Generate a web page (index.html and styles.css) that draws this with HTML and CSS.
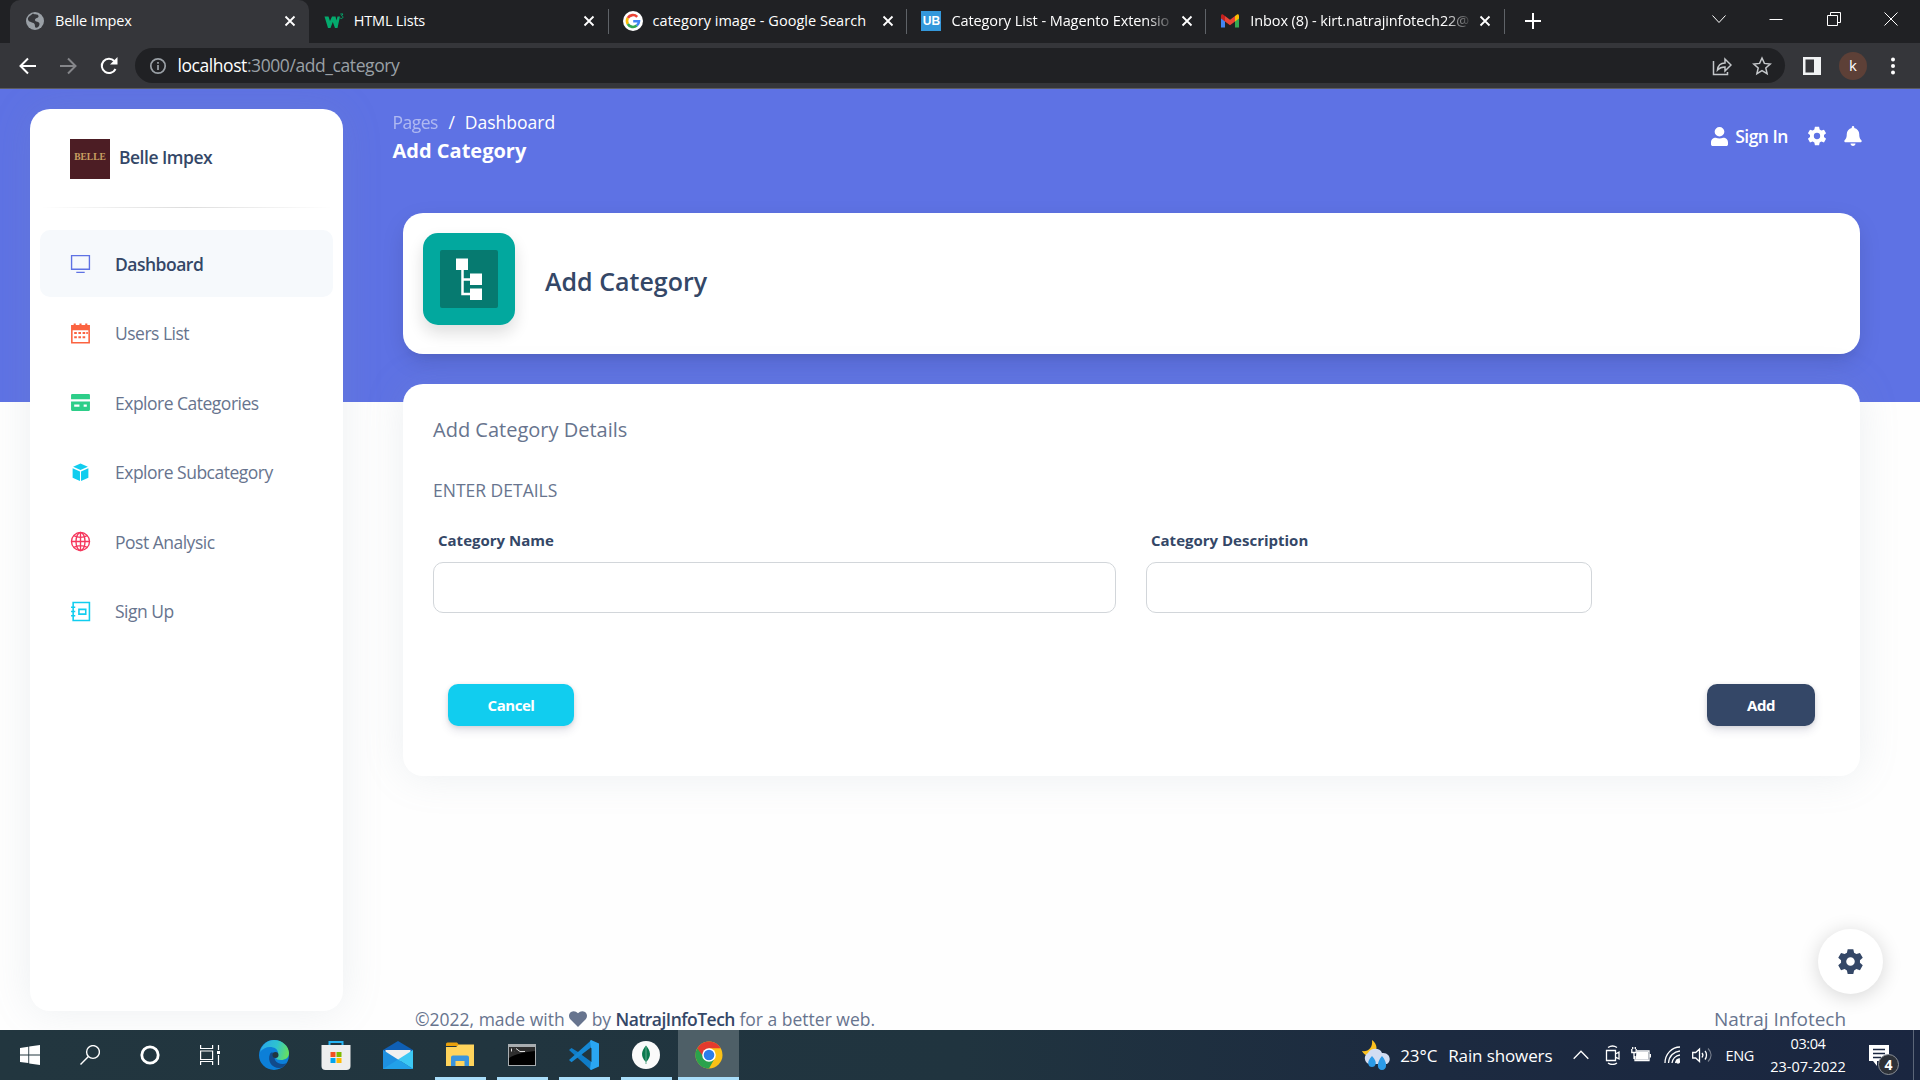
FILE: index.html
```html
<!DOCTYPE html>
<html lang="en">
<head>
<meta charset="utf-8">
<title>Belle Impex</title>
<link rel="stylesheet" href="styles.css">
</head>
<body>
<header class="tabstrip">
  <div class="tab tab-active">
    <svg class="fav" viewBox="0 0 20 20"><circle cx="10" cy="10" r="9" fill="#9aa0a6"/><path d="M8 2.500c2 1.500 5 0 5.500 2.500S10 6.500 10 9s4.500 1 4.500 4-3 4.500-4 3.500 0-3.500-2-4.500-5-1-5.500-3.500S5 5 8 2.500z" fill="#35363a"/></svg>
    <span class="tab-title snug">Belle Impex</span>
    <svg class="x" viewBox="0 0 12 12"><path d="M1.500 1.500l9 9m0-9l-9 9"/></svg>
  </div>
  <div class="tab">
    <svg class="fav" viewBox="0 0 20 20"><path d="M.5 5.500h4l1.500 4.500L8 5.500h3.500l1 4 1-4h2.500L13.500 17h-2.500L8.800 11 6.500 17H4z" fill="#04aa6d"/><path d="M16.300 3h2.700l-1.500 1.700c2 .3 1.800 2.800-.3 2.800l-1-.4" fill="none" stroke="#04aa6d" stroke-width="1"/></svg>
    <span class="tab-title snug">HTML Lists</span>
    <svg class="x" viewBox="0 0 12 12"><path d="M1.500 1.500l9 9m0-9l-9 9"/></svg>
  </div>
  <div class="tab tab-sep">
    <svg class="fav" viewBox="0 0 20 20"><circle cx="10" cy="10" r="10" fill="#fff"/><g fill="none" stroke-width="2.600"><path d="M14.200 5.800A6 6 0 0 0 4.800 7" stroke="#ea4335"/><path d="M4.800 7a6 6 0 0 0 0 6" stroke="#fbbc05"/><path d="M4.800 13a6 6 0 0 0 9 1.600" stroke="#34a853"/><path d="M13.800 14.600A6 6 0 0 0 16 10.200H10.200" stroke="#4285f4"/></g></svg>
    <span class="tab-title even">category image - Google Search</span>
    <svg class="x" viewBox="0 0 12 12"><path d="M1.500 1.500l9 9m0-9l-9 9"/></svg>
  </div>
  <div class="tab tab-sep">
    <span class="fav ub">UB</span>
    <span class="tab-title fade">Category List - Magento Extensio</span>
    <svg class="x" viewBox="0 0 12 12"><path d="M1.500 1.500l9 9m0-9l-9 9"/></svg>
  </div>
  <div class="tab tab-sep">
    <svg class="fav" viewBox="0 0 20 20"><path d="M1 5v11.500h4V8z" fill="#4285f4"/><path d="M19 5v11.500h-4V8z" fill="#34a853"/><path d="M15 5l2-1.500c1-.6 2 0 2 1.500v2.500l-4 3z" fill="#fbbc04"/><path d="M5 5L3 3.500C2 2.900 1 3.500 1 5v2.500l4 3z" fill="#c5221f"/><path d="M5 5l5 3.800L15 5v5.500l-5 3.800-5-3.800z" fill="#ea4335"/></svg>
    <span class="tab-title fade">Inbox (8) - kirt.natrajinfotech22@</span>
    <svg class="x" viewBox="0 0 12 12"><path d="M1.500 1.500l9 9m0-9l-9 9"/></svg>
  </div>
  <div class="newtab"><svg viewBox="0 0 16 16"><path d="M8 0v16M0 8h16"/></svg></div>
  <div class="winctl">
    <svg viewBox="0 0 14 14"><path d="M.5 3.500L7 10.500l6.500-7"/></svg>
    <svg viewBox="0 0 14 14"><path d="M.5 7.500h13"/></svg>
    <svg viewBox="0 0 14 14"><path d="M.5 3.500h10v10H.5zM3.500 3.500v-3h10v10h-3"/></svg>
    <svg viewBox="0 0 14 14"><path d="M.5.5l13 13m0-13l-13 13"/></svg>
  </div>
</header>
<nav class="toolbar">
  <svg class="nav-ico" viewBox="0 0 20 20"><path d="M18 10H2.500M10 2.500L2.500 10l7.500 7.500"/></svg>
  <svg class="nav-ico dim" viewBox="0 0 20 20"><path d="M2 10h15.500M10 2.500l7.500 7.500-7.500 7.500"/></svg>
  <svg class="nav-ico" viewBox="0 0 20 20"><path d="M16.500 13a7.200 7.200 0 1 1-1.200-8"/><path d="M18.500 1v7.500H11z" fill="#fff" stroke="none"/></svg>
  <div class="omnibox">
    <svg class="info" viewBox="0 0 18 18"><circle cx="9" cy="9" r="7.200"/><path d="M9 8v5M9 5v1.800"/></svg>
    <span class="url"><b>localhost</b>:3000/add_category</span>
    <svg class="share" viewBox="0 0 20 20"><path d="M1.500 5v13.500h14V16M5.500 14c.5-5 3-7 7.500-7V3l6 6-6 6v-4c-3.500 0-5.500.8-7.500 3z"/></svg>
    <svg class="star" viewBox="0 0 20 20"><path d="M10 2l2.400 5.400 5.800.6-4.400 3.900 1.300 5.800L10 14.700l-5.100 3 1.300-5.800L1.800 8l5.800-.6z"/></svg>
  </div>
  <svg class="side" viewBox="0 0 18 18"><path d="M0 0h18v18H0zM2.500 2.500v13h8.500v-13z" fill="#f1f3f4" fill-rule="evenodd"/></svg>
  <span class="avatar">k</span>
  <svg class="dots" viewBox="0 0 4 18"><circle cx="2" cy="2.500" r="2"/><circle cx="2" cy="9" r="2"/><circle cx="2" cy="15.500" r="2"/></svg>
</nav>
<div class="page">
  <aside class="sidebar">
    <div class="brand"><span class="logo">BELLE</span><span class="medium">Belle Impex</span></div>
    <div class="rule"></div>
    <ul class="menu">
      <li class="active"><svg viewBox="0 0 20 20" stroke="#5e72e4"><path d="M1.500 2.500h17v13h-17zM6 18.500h8" fill="none" stroke-width="1.300"/></svg><span class="medium">Dashboard</span></li>
      <li><svg viewBox="0 0 20 20" fill="#fb6340"><path fill-rule="evenodd" d="M1 2h2.500V.5h2V2h3.500V.5h2V2h3.500V.5h2V2H19v17.500H1zM2.500 7v11h15V7zM8 8.500h2.500v2H8zm4 0h2.500v2H12zM4 12.500h2.500v2H4zm4 0h2.500v2H8zm-4-4h2.500v2H4zm11.500 0H17v2h-1.500zM12 12.500h2.500v2H12z"/></svg><span>Users List</span></li>
      <li><svg viewBox="0 0 20 20" fill="#2dce89"><path fill-rule="evenodd" d="M2 2h16a1 1 0 0 1 1 1v4H1V3a1 1 0 0 1 1-1zM1 9h18v8a1 1 0 0 1-1 1H2a1 1 0 0 1-1-1zM4 12v2h5v-2zm9 0v2h3v-2z"/></svg><span>Explore Categories</span></li>
      <li><svg viewBox="0 0 20 20" fill="#11cdef"><path d="M10 1.500l7 3-7 3-7-3zM2.500 6l7 3v9l-7-3zM17.500 6l-7 3v9l7-3z"/></svg><span>Explore Subcategory</span></li>
      <li><svg viewBox="0 0 20 20" fill="none" stroke="#f5365c" stroke-width="1.300"><circle cx="10" cy="10" r="8.600"/><ellipse cx="10" cy="10" rx="4.300" ry="8.600"/><path d="M10 1.400v17.200M1.400 10h17.200M3.500 4.500c4 2 9 2 13 0M3.500 15.500c4-2 9-2 13 0"/></svg><span>Post Analysic</span></li>
      <li><svg viewBox="0 0 20 20" fill="none" stroke="#11cdef" stroke-width="1.500"><path d="M3 1.500h15.500v17H3zM8.500 8h6.500v4.500H8.500zM1 6h4M1 10h4M1 14h4"/></svg><span>Sign Up</span></li>
    </ul>
  </aside>
  <main class="main">
    <div class="topbar">
      <div>
        <div class="crumbs"><span class="muted">Pages</span><i>/</i><span>Dashboard</span></div>
        <h6 class="title">Add Category</h6>
      </div>
      <div class="actions">
        <svg class="user" viewBox="0 0 448 512" preserveAspectRatio="none"><path d="M224 256A128 128 0 1 0 224 0a128 128 0 1 0 0 256zm-96 32C50 288 0 345 0 410v54c0 26 21 48 48 48h352c27 0 48-22 48-48v-54c0-65-50-122-128-122-60 28-132 28-192 0z"/></svg>
        <span class="signin">Sign In</span>
        <svg class="cog" viewBox="0 0 24 24"><path fill-rule="evenodd" d="M9.500 1h5l.7 3.200 2 1.200 3.200-1 2.500 4.300-2.500 2.200v2.300l2.500 2.200-2.500 4.300-3.200-1-2 1.200-.7 3.200h-5l-.7-3.200-2-1.200-3.200 1L1.100 15.400l2.500-2.200v-2.300L1.100 8.700l2.500-4.300 3.200 1 2-1.200zM12 8.200a3.800 3.800 0 1 0 0 7.600 3.800 3.800 0 0 0 0-7.600z"/></svg>
        <svg class="bell" viewBox="0 0 448 512"><path d="M224 512c35 0 64-29 64-64H160c0 35 29 64 64 64zM439 362c-19-20-55-51-55-154 0-77-54-139-128-155V32a32 32 0 1 0-64 0v21C118 69 64 131 64 208c0 103-36 134-55 154-6 6-9 14-9 22 0 16 13 32 32 32h384c19 0 32-16 32-32 0-8-3-16-9-22z"/></svg>
      </div>
    </div>
    <section class="card hero">
      <svg class="tile" viewBox="0 0 92 92"><rect width="92" height="92" fill="#02a89e"/><rect x="17" y="17" width="58" height="58" rx="2" fill="#067a70"/><path d="M39.500 36v25H48M39.500 46.500H48" fill="none" stroke="#fff" stroke-width="2.500"/><path d="M33 25.500h12v11.500H33zM47 40.500h12V52H47zM47 55.500h12V67H47z" fill="#fff"/></svg>
      <h5>Add Category</h5>
    </section>
    <section class="card form">
      <p class="lead">Add Category Details</p>
      <p class="sub">ENTER DETAILS</p>
      <div class="fields">
        <label class="w1"><span>Category Name</span><input type="text"></label>
        <label class="w2"><span>Category Description</span><input type="text"></label>
      </div>
      <div class="btns"><button class="btn info-btn">Cancel</button><button class="btn dark-btn">Add</button></div>
    </section>
    <footer class="foot">
      <span class="made"><span>©2022, made with</span><svg viewBox="0 0 18 16"><path d="M9 16L1.300 8.300C-.7 6-.3 2.500 2 1c2.200-1.500 5-1 7 1.200C11-.0 13.800-.5 16 1c2.300 1.500 2.700 5 .7 7.300z"/></svg><span>by</span><b>NatrajInfoTech</b><span>for a better web.</span></span>
      <span class="company">Natraj Infotech</span>
    </footer>
  </main>
  <div class="fab"><svg viewBox="0 0 24 24"><path fill-rule="evenodd" d="M9.500 1h5l.7 3.200 2 1.200 3.200-1 2.500 4.300-2.500 2.200v2.300l2.500 2.200-2.500 4.300-3.200-1-2 1.200-.7 3.200h-5l-.7-3.200-2-1.200-3.200 1L1.100 15.400l2.500-2.200v-2.300L1.100 8.700l2.500-4.300 3.200 1 2-1.200zM12 8.200a3.800 3.800 0 1 0 0 7.600 3.800 3.800 0 0 0 0-7.600z"/></svg></div>
</div>
<div class="taskbar">
  <div class="apps">
    <span class="app sm"><svg width="20" height="20" viewBox="0 0 20 20"><path d="M0 3l8.300-1.200v7.700H0zM9.200 1.600L20 0v9.500H9.200zM0 10.400h8.300v7.700L0 17zM9.200 10.400H20V20L9.200 18.400z" fill="#fff"/></svg></span>
    <span class="app sm"><svg width="20" height="20" viewBox="0 0 20 20" fill="none" stroke="#fff" stroke-width="1.400"><circle cx="13" cy="7" r="6.400"/><path d="M8.400 11.600L.5 19.500"/></svg></span>
    <span class="app sm"><svg width="20" height="20" viewBox="0 0 20 20" fill="none" stroke="#fff" stroke-width="2.800"><circle cx="10" cy="10" r="8.200"/></svg></span>
    <span class="app sm"><svg width="20" height="20" viewBox="0 0 20 20" fill="none" stroke="#fff" stroke-width="1.200"><path d="M.6 0v3.500h12V0M.6 6h12v8.500H.6zM.6 20v-3.500h12V20M18.500 0v5M18.500 10v10"/><path d="M17 6h3v3h-3z" fill="#fff" stroke="none"/></svg></span>
    <span class="app wd"><svg width="30" height="30" viewBox="0 0 30 30"><defs><linearGradient id="edge" x1="0" y1=".3" x2="1" y2=".5"><stop offset="0" stop-color="#2ba8e8"/><stop offset=".55" stop-color="#2ec2d0"/><stop offset="1" stop-color="#66e060"/></linearGradient></defs><circle cx="15" cy="15" r="15" fill="#0c7fd8"/><path d="M1 12C3 4 9 0 15 0c8 0 15 6 15 13 0 5-4 7-8 7-3 0-5-1-5-2s2-2 2-5c0-4-4-6-8-6-4 0-8 2-10 5z" fill="url(#edge)"/><path d="M11 14c-3 7 2 14 9 14 3 0 6-2 8-5-4 2-10 1-12-3-1-2 0-4 1-5-2-3-5-3-6-1z" fill="#114a8b"/><circle cx="16.500" cy="15" r="3" fill="#22363f"/></svg></span>
    <span class="app wd"><svg width="30" height="30" viewBox="0 0 30 30"><path d="M8.500 7V2h13v5" fill="none" stroke="#27b4f3" stroke-width="2"/><path d="M.5 5h29v21a4 4 0 0 1-4 4h-21a4 4 0 0 1-4-4z" fill="#eee"/><path d="M9.500 12h5v5h-5z" fill="#f25022"/><path d="M15.500 12h5v5h-5z" fill="#7fba00"/><path d="M9.500 18h5v5h-5z" fill="#00a4ef"/><path d="M15.500 18h5v5h-5z" fill="#ffb900"/></svg></span>
    <span class="app wd"><svg width="30" height="30" viewBox="0 0 30 30"><path d="M0 10L15 1l15 9v5H0z" fill="#0f5fb4"/><path d="M2.500 10h25v6L15 22 2.500 16z" fill="#f0f0f0"/><path d="M0 10l30 19H0z" fill="#1e90e0"/><path d="M30 10L15 19.500 30 29z" fill="#3cc8f4"/><path d="M15 19.500L30 29H0z" fill="#22a0e8"/></svg></span>
    <span class="app wd run"><svg width="28" height="26" viewBox="0 0 28 26"><path d="M0 2a1.500 1.500 0 0 1 1.500-1.500H11L14 4H0z" fill="#e8a00c"/><path d="M0 5h10l3-2.500h15V24H0z" fill="#ffd45c"/><path d="M5 24v-8.500a2 2 0 0 1 2-2h14a2 2 0 0 1 2 2V24h-4.500v-5h-9v5z" fill="#3a95dd"/></svg></span>
    <span class="app wd run"><svg width="28" height="24" viewBox="0 0 28 24"><path d="M0 1h28v22H0z" fill="#a8adb0"/><path d="M1 4h26v18H1z" fill="#000"/><path d="M1 4h26v4C16 9 8 11 1 15z" fill="#2e2e2e"/><path d="M3.500 5.500v3M6 5.500h.1M6 8.500h.1M8 5.500l4 3h5" stroke="#ddd" fill="none"/></svg></span>
    <span class="app wd run"><svg width="30" height="30" viewBox="0 0 30 30"><path d="M0 10l2.500-2L30 25l-8 5z" fill="#0f7cc7"/><path d="M0 20l2.500 2.300L22.500 7V0z" fill="#1588d4"/><path d="M22 0l8 3.500v23L22 30l-1-1 1-7V8l-1-7z" fill="#2aa6f2"/><path d="M22.500 8v14L13 15z" fill="#22363f"/></svg></span>
    <span class="app wd run"><svg width="28" height="28" viewBox="0 0 28 28"><circle cx="14" cy="14" r="14" fill="#fafafa"/><path d="M14 4.500c4.500 5 6 11 0 16.500-6-5.500-4.500-11.500 0-16.500z" fill="#0a7a4e"/><path d="M14 5v18" stroke="#5fa88a"/></svg></span>
    <span class="app last run"><svg width="28" height="28" viewBox="0 0 28 28"><circle cx="14" cy="14" r="13.500" fill="#fbc116"/><path d="M14 14L2.300 7.200A13.500 13.500 0 0 0 14 27.500l5-9z" fill="#2ba24c"/><path d="M2.300 7.200A13.500 13.500 0 0 1 25.700 7.200H14L8.500 16z" fill="#e33b2e"/><circle cx="14" cy="14" r="6.800" fill="#fff"/><circle cx="14" cy="14" r="5.300" fill="#2b7de9"/></svg></span>
  </div>
  <div class="tray">
    <svg class="weather" width="28" height="30" viewBox="0 0 28 30"><path d="M10 0c5 4 7 10 0 15-4 2-8 0-10-4 6 1 11-3 10-11z" fill="#fcc11f"/><path d="M7 24a6 6 0 0 1-1-11c2-5 12-6 14 0 8-1 10 8 5 11z" fill="#d2ddf2"/><path d="M10 16c-6 6-4 11 0 11s6-5 0-11zM20 16c-6 7-5 14 0 14s6-7 0-14z" fill="#2b9be8"/></svg>
    <span>23°C</span><span class="rain">Rain showers</span>
    <svg class="chev" width="16" height="10" viewBox="0 0 16 10"><path d="M.7 8.700L8 1.200l7.300 7.500"/></svg>
    <svg class="cam" width="16" height="20" viewBox="0 0 16 20"><path d="M1.500 5.500h9v10h-9zM10.500 9l3.500-2v7l-3.500-2M3 2.500c3-2 6-2 9 0M3 18c3 2 6 2 9 0"/></svg>
    <svg class="bat" width="20" height="16" viewBox="0 0 20 16"><path d="M6 4h12v9.500H4V9M19.500 7v3.500M.8 2v3.500h4.400V2M1.700 0v2M4.300 0v2M3 5.500V12"/><path d="M6 5.500h10.500V12H5.500z" fill="#fff"/></svg>
    <svg class="wifi" width="16" height="18" viewBox="0 0 16 18"><path d="M1 17C1 8 8 1 16 1M4.500 17C5 10 10 5.500 16 5M8 17c.5-4 3.500-7.500 8-8M11.500 17c.5-2 2-4 4.500-4"/><circle cx="14" cy="15.500" r="1.500" fill="#fff"/></svg>
    <svg class="vol" width="20" height="18" viewBox="0 0 20 18"><path d="M.7 6.500h3L7.500 3v12.500L3.700 12h-3zM10 7c1 1 1 3 0 4.500M13 5c2 2 2 6 0 8.500"/><path d="M16 2.500c4 4 4 9 0 13" opacity=".4"/></svg>
    <span class="lang">ENG</span>
    <div class="clock"><span class="time">03:04</span><span>23-07-2022</span></div>
    <div class="notif"><svg width="20" height="22" viewBox="0 0 20 22"><path d="M0 0h20v16H8v5l-4-5H0z" fill="#fff"/><path d="M4 4.500h12M4 8.500h12M4 12.500h8" stroke="#1b2740"/></svg><span class="badge">4</span></div>
  </div>
</div>
</body>
</html>
```
FILE: styles.css
```css
* { box-sizing: border-box; }
body { margin: 0; width: 1920px; height: 1080px; overflow: hidden; display: flex; flex-direction: column; font-family: "Open Sans", "Noto Sans", sans-serif; background: #fefefe; }
svg { display: block; flex: none; }
span { white-space: nowrap; }

/* browser chrome */
.tabstrip { flex: none; height: 43px; background: #202124; display: flex; align-items: stretch; padding-left: 10px; color: #fff; font-size: 14.500px; }
.tab { position: relative; flex: none; width: 298.800px; display: flex; align-items: center; padding: 0 11.500px 2px 15px; }
.tab-active { background: #35363a; border-radius: 10px 10px 0 0; }
.tab-sep::before { content: ""; position: absolute; left: 0; top: 9px; width: 1px; height: 25px; background: #5f6368; }
.fav { width: 20px; height: 20px; flex: none; margin-right: 10px; }
.ub { background: #3498db; font: bold 12px/20px "Liberation Sans", sans-serif; text-align: center; }
.tab-title { flex: 1; margin: 0 8px 1px 0; letter-spacing: -.08px; }
.snug { letter-spacing: -.2px; }
.even { letter-spacing: .03px; }
.fade { mask-image: linear-gradient(90deg, #000 88%, transparent 101%); }
.x { width: 12px; height: 12px; stroke: #fff; stroke-width: 1.800; margin-right: 1px; }
.newtab { position: relative; padding: 13px 21px 0; }
.newtab::before { content: ""; position: absolute; left: 0; top: 9px; width: 1px; height: 25px; background: #5f6368; }
.newtab svg { width: 16px; height: 16px; stroke: #fff; stroke-width: 2; }
.winctl { margin-left: auto; display: flex; gap: 43.500px; padding: 12px 22px 0 0; }
.winctl svg { width: 14px; height: 14px; fill: none; stroke: #fff; stroke-width: 1; }
.toolbar { flex: none; height: 46px; background: #35363a; border-bottom: 1px solid #5b5c61; display: flex; align-items: center; padding: 0 20px 0 18px; }
.nav-ico { width: 20px; height: 20px; fill: none; stroke: #fff; stroke-width: 2; margin-right: 20.300px; }
.dim { stroke: #85868a; }
.omnibox { width: 1650px; height: 35px; margin-left: -4px; border-radius: 18px; background: #202124; display: flex; align-items: center; padding: 0 13px 0 14px; }
.info { width: 18px; height: 18px; fill: none; stroke: #9aa0a6; stroke-width: 1.700; margin-right: 10.500px; }
.url { flex: 1; margin-bottom: 1px; font-size: 17.500px; letter-spacing: -.42px; color: #9aa0a6; }
.url b { font-weight: 400; color: #fff; }
.share, .star { width: 20px; height: 20px; fill: none; stroke: #c4c7ca; stroke-width: 1.500; margin-left: 20px; }
.side { width: 18px; height: 18px; margin-left: 18px; }
.avatar { width: 28px; height: 28px; border-radius: 50%; background: #5d4037; color: #fff; font-size: 15px; line-height: 27px; text-align: center; margin: 0 24px 0 18px; }
.dots { width: 4px; height: 18px; fill: #fff; }

/* dashboard */
.page { position: relative; flex: none; height: 941px; overflow: hidden; display: flex; background: linear-gradient(#5e72e4 0 313px, #fefefe 313px); font-size: 17.500px; color: #67748e; }
.sidebar { flex: none; width: 313px; height: 902px; margin: 20px 0 0 30px; background: #fff; border-radius: 20px; box-shadow: 0 0 40px rgba(136, 152, 170, .15); letter-spacing: -.5px; }
.medium { font-weight: 600; letter-spacing: -.5px; color: #344767; }
.brand { display: flex; align-items: center; height: 98px; padding: 2px 0 0 40px; gap: 9px; }
.brand .medium { margin-bottom: 5px; }
.logo { width: 40px; height: 40px; background: #4c1d24; color: #c9a063; font: bold 9.500px/37px "Liberation Serif", serif; letter-spacing: 0; text-align: center; }
.rule { height: 1px; margin: 0 10px; background: linear-gradient(90deg, transparent, #ddd, transparent); }
.menu { list-style: none; margin: 22px 10px 0; padding: 0; display: flex; flex-direction: column; gap: 2.500px; }
.menu li { height: 67px; border-radius: 10px; display: flex; align-items: center; gap: 24px; padding-left: 30px; }
.menu svg { width: 21px; height: 21px; }
.active { background: #f6f9fc; }
.main { flex: none; width: 1457px; margin-left: 60px; display: flex; flex-direction: column; }
.main > * { flex: none; }
.topbar { height: 124px; margin: 0 -2px 0 -10.500px; padding-top: 20px; display: flex; justify-content: space-between; color: #fff; }
.crumbs { display: flex; line-height: 27px; }
.crumbs i { font-style: normal; margin: 0 10px 0 10.500px; }
.muted { opacity: .5; letter-spacing: -.5px; }
.title { margin: -1px 0 0; font-size: 20px; line-height: 31px; font-weight: 700; }
.actions { display: flex; align-items: center; height: 54px; fill: #fff; }
.user { width: 17px; height: 19px; margin-right: 7px; }
.signin { font-weight: 600; letter-spacing: -.5px; }
.actions .cog { width: 20px; height: 20px; margin: 0 17px 0 19px; }
.bell { width: 18px; height: 20px; }
.card { background: #fff; border-radius: 20px; }
.hero { height: 141px; display: flex; align-items: flex-start; padding: 20px; gap: 30px; box-shadow: 0 8px 26px -4px rgba(20, 20, 20, .15), 0 8px 9px -5px rgba(20, 20, 20, .06); }
.tile { width: 92px; height: 92px; border-radius: 15px; box-shadow: 0 8px 16px rgba(20, 20, 20, .14); }
.hero h5 { margin: 30px 0 0; font-size: 25px; line-height: 36px; font-weight: 600; color: #344767; }
.form { height: 392px; margin-top: 30px; padding: 30px; box-shadow: 0 0 40px rgba(136, 152, 170, .15); }
.lead { margin: 0; font-size: 20px; line-height: 32px; }
.sub { margin: 30px 0 0; line-height: 28px; }
.fields { display: flex; gap: 30px; margin-top: 24px; }
.fields label { display: flex; flex-direction: column; font-size: 15px; font-weight: 700; color: #344767; line-height: 24px; }
.fields label span { margin-left: 5px; align-self: flex-start; }
.w1 { width: 683px; }
.w2 { width: 446px; }
.fields input { height: 51px; margin-top: 10px; border: 1px solid #d2d6da; border-radius: 10px; background: #fff; }
.btns { display: flex; justify-content: space-between; padding: 0 15px; margin-top: 71px; }
.btn { height: 42px; border: 0; border-radius: 10px; color: #fff; font: 700 15px "Open Sans", sans-serif; letter-spacing: -.45px; box-shadow: 0 5px 9px rgba(50, 50, 93, .13), 0 1px 4px rgba(0, 0, 0, .1); }
.info-btn { width: 126px; background: #11cdef; }
.dark-btn { width: 108px; background: #344767; }
.foot { display: flex; justify-content: space-between; height: 24px; margin-top: 231px; padding: 0 14px 0 12px; line-height: 24px; }
.made { display: flex; align-items: center; }
.made svg { width: 18px; height: 16px; fill: #67748e; margin: 0 4.500px; }
.made b { margin: 0 4.500px; font-weight: 600; letter-spacing: -.52px; color: #344767; }
.company { font-size: 19px; letter-spacing: -.05px; }
.fab { position: absolute; left: 1818px; top: 840px; width: 65px; height: 65px; border-radius: 50%; background: #fff; display: grid; place-items: center; box-shadow: 0 3px 20px rgba(0, 0, 0, .16); }
.fab svg { width: 27px; height: 27px; fill: #344767; }

/* taskbar */
.taskbar { flex: none; height: 50px; background: linear-gradient(90deg, #22363f, #20343f 50%, #1c2a40 75%, #1a2640); display: flex; justify-content: space-between; color: #fff; }
.apps { display: flex; }
.app { width: 62px; display: grid; place-items: center; }
.sm { width: 60px; }
.apps .sm + .wd { margin-left: 3px; }
.run { background: linear-gradient(#a9defa, #a9defa) center bottom / 51px 3px no-repeat; }
.last { width: 61px; margin-left: 1px; background: linear-gradient(#a9defa, #a9defa) center bottom / 61px 3px no-repeat, #4e5f67; }
.tray { display: flex; align-items: center; font-size: 17px; letter-spacing: -.12px; fill: none; stroke: none; }
.tray svg { stroke-width: 1.300; }
.chev, .cam, .bat, .wifi, .vol { stroke: #fff; }
.weather { margin-right: 10px; }
.rain { margin-left: 11px; }
.chev { margin: 0 16px 0 21px; }
.cam { margin-right: 10px; }
.bat { margin-right: 13px; }
.wifi { margin-right: 12px; }
.vol { margin-right: 13px; }
.lang { font-size: 14.500px; letter-spacing: -.3px; }
.clock { width: 76px; margin-left: 16px; display: flex; flex-direction: column; align-items: center; font-size: 14.500px; line-height: 23px; letter-spacing: 0; }
.time { letter-spacing: -.4px; }
.notif { position: relative; width: 51px; height: 50px; margin-left: 17px; padding: 15px 0 0 6px; border-right: 1px solid #5b6678; margin-right: 6px; }
.badge { position: absolute; left: 15px; top: 24px; width: 21px; height: 21px; border-radius: 50%; background: #2d3138; border: 1px solid #8a8f96; font: bold 14px/19px "Open Sans", sans-serif; text-align: center; }
```
